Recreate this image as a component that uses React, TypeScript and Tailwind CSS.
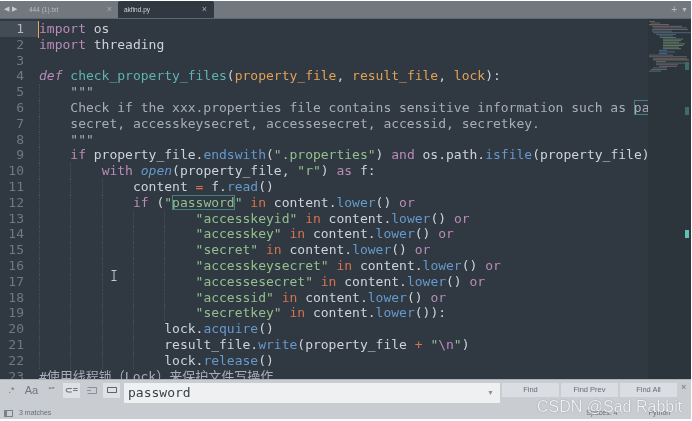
import React from "react";

const W = "text-[#cdd3da]";
const K = "text-[#b98cb9]";
const F = "text-[#5fb3b3]";
const P = "text-[#e0a258]";
const S = "text-[#93c08f]";
const B = "text-[#6699cc]";
const R = "text-[#d8714f]";
const C = "text-[#a7adba]";
const I = "text-[#6699cc] italic";
const D = "text-[#b98cb9] italic";
const M = "outline outline-1 outline-[#47807f] -outline-offset-1";

type T = [string, string];

const access = (name: string, end: T[]): T[] => [
  [`"${name}"`, S],
  [" ", W],
  ["in", R],
  [" content.", W],
  ["lower", B],
  ...end,
];
const orEnd: T[] = [["() ", W], ["or", K]];

const lines: { ind: number; t: T[] }[] = [
  { ind: 0, t: [["import", K], [" os", W]] },
  { ind: 0, t: [["import", K], [" threading", W]] },
  { ind: 0, t: [] },
  {
    ind: 0,
    t: [
      ["def", D],
      [" ", W],
      ["check_property_files", F],
      ["(", W],
      ["property_file", P],
      [", ", W],
      ["result_file", P],
      [", ", W],
      ["lock", P],
      ["):", W],
    ],
  },
  { ind: 1, t: [['"""', C]] },
  { ind: 1, t: [["Check if the xxx.properties file contains sensitive information such as ", C], ["pa", `${C} ${M}`]] },
  { ind: 1, t: [["secret, accesskeysecret, accessesecret, accessid, secretkey.", C]] },
  { ind: 1, t: [['"""', C]] },
  {
    ind: 1,
    t: [
      ["if", K],
      [" property_file.", W],
      ["endswith", B],
      ["(", W],
      ['".properties"', S],
      [") ", W],
      ["and", K],
      [" os.path.", W],
      ["isfile", B],
      ["(property_file):", W],
    ],
  },
  {
    ind: 2,
    t: [
      ["with", K],
      [" ", W],
      ["open", I],
      ["(property_file, ", W],
      ['"r"', S],
      [") ", W],
      ["as", K],
      [" f:", W],
    ],
  },
  { ind: 3, t: [["content ", W], ["=", R], [" f.", W], ["read", B], ["()", W]] },
  {
    ind: 3,
    t: [
      ["if", K],
      [" (", W],
      ['"', S],
      ["password", `${S} ${M}`],
      ['"', S],
      [" ", W],
      ["in", R],
      [" content.", W],
      ["lower", B],
      ["() ", W],
      ["or", K],
    ],
  },
  { ind: 5, t: access("accesskeyid", orEnd) },
  { ind: 5, t: access("accesskey", orEnd) },
  { ind: 5, t: access("secret", orEnd) },
  { ind: 5, t: access("accesskeysecret", orEnd) },
  { ind: 5, t: access("accessesecret", orEnd) },
  { ind: 5, t: access("accessid", orEnd) },
  { ind: 5, t: access("secretkey", [["()):", W]]) },
  { ind: 4, t: [["lock.", W], ["acquire", B], ["()", W]] },
  {
    ind: 4,
    t: [
      ["result_file.", W],
      ["write", B],
      ["(property_file ", W],
      ["+", R],
      [" ", W],
      ['"', S],
      ["\\n", K],
      ['"', S],
      [")", W],
    ],
  },
  { ind: 4, t: [["lock.", W], ["release", B], ["()", W]] },
  { ind: 0, t: [["#使用线程锁（Lock）来保护文件写操作", C]] },
];

const mono = "font-['DejaVu_Sans_Mono','Noto_Sans_CJK_SC',monospace]";

function Minimap() {
  const colors = ["#8a9099", "#b08fb0", "#5fb3b3", "#e5a55a", "#93c08f", "#6699cc"];
  const rows: [number, number, number][] = [
    [1, 6, 0], [3, 9, 0], [1, 20, 3], [4, 30, 1], [5, 34, 0], [4, 36, 0], [4, 20, 0], [5, 38, 5],
    [8, 20, 0], [11, 14, 0], [12, 16, 2], [15, 20, 4], [15, 18, 4], [15, 16, 4], [15, 22, 4], [15, 20, 4],
    [15, 16, 4], [15, 18, 4], [11, 8, 5], [11, 16, 5], [11, 8, 5], [1, 24, 0], [1, 38, 0], [5, 34, 0],
    [5, 36, 3], [8, 10, 0], [8, 30, 0], [8, 22, 0], [11, 18, 1], [5, 14, 0], [3, 16, 0], [1, 12, 2],
  ];
  return (
    <svg width="43" height="70" viewBox="0 0 43 70" className="block">
      {rows.map(([x, w, c], i) => (
        <rect key={i} x={x} y={2 + i * 1.6} width={w} height="1" fill={colors[c]} opacity="0.5" />
      ))}
    </svg>
  );
}

function Toggle({ active, children, big }: { active?: boolean; children: React.ReactNode; big?: boolean }) {
  return (
    <div
      className={`w-[17px] h-[15px] flex items-center justify-center text-[#6f767d] ${big ? "text-[11px]" : "text-[9px]"} ${active ? "bg-[#dfe2e5]" : ""}`}
    >
      {children}
    </div>
  );
}

function FindButton({ label }: { label: string }) {
  return (
    <div className="w-[57px] h-[14px] bg-[#dadde1] flex items-center justify-center text-[7.5px] text-[#666d74]">
      {label}
    </div>
  );
}

export default function App() {
  return (
    <div className="w-[692px] h-[421px] bg-white pt-px pr-px pb-[2px] overflow-hidden font-['Liberation_Sans',sans-serif] blur-[0.45px]">
      <div className="w-full h-full flex flex-col bg-[#303841]">
        <div className="h-[18px] shrink-0 bg-[#71787f] flex items-stretch border-b border-[#5f666d]">
          <div className="w-[29px] flex items-center gap-[3px] pl-[4px] text-[7px] text-[#c5c9ce]">
            <span>◀</span>
            <span>▶</span>
          </div>
          <div className="w-[89px] flex items-center justify-between pr-[6px] text-[6.5px] text-[#b9bdc2]">
            <span>444 (1).txt</span>
            <span className="text-[9px] text-[#a9adb2]">×</span>
          </div>
          <div className="w-[96px] bg-[#303841] rounded-t-[2px] flex items-center justify-between pl-[6px] pr-[7px] text-[6.5px] text-[#d0d4d8]">
            <span>akfind.py</span>
            <span className="text-[9px] text-[#a9adb2]">×</span>
          </div>
          <div className="flex-1 flex items-center justify-end gap-[4px] pr-[3px] text-[#b9bdc2]">
            <span className="text-[10px] leading-none">+</span>
            <span className="text-[7px] leading-none">▼</span>
          </div>
        </div>

        <div className="relative flex-1 min-h-0 flex overflow-hidden">
          <div className={`flex-1 min-w-0 overflow-hidden pt-[2px] text-[13px] leading-[15.8px] ${mono}`}>
            {lines.map((l, i) => (
              <div key={i} className="flex h-[15.8px] whitespace-pre">
                <div
                  className={`w-[39px] shrink-0 pr-[15px] text-right ${i === 0 ? "bg-[#434b55] text-[#b4b9bf]" : "text-[#707983]"}`}
                >
                  {i + 1}
                </div>
                <div className="relative flex-1 min-w-0 flex">
                  {i === 0 && <div className="absolute left-[-1px] top-0 w-px h-[17px] bg-[#e5a55a]" />}
                  {Array.from({ length: l.ind }).map((_, g) => (
                    <span
                      key={g}
                      className="inline-block w-[31.32px] shrink-0 border-l border-dotted border-[#464e57]"
                    />
                  ))}
                  <span>
                    {l.t.map(([s, c], j) => (
                      <span key={j} className={c}>
                        {s}
                      </span>
                    ))}
                  </span>
                </div>
              </div>
            ))}
          </div>
          <div className="w-[43px] shrink-0 bg-[#2c343c] relative">
            <Minimap />
            <div className="absolute left-[37px] top-[43px] w-[4px] h-[8px] bg-[#3f6a6c]" />
            <div className="absolute left-[37px] top-[88px] w-[4px] h-[8px] bg-[#3f6a6c]" />
            <div className="absolute left-[37px] top-[211px] w-[4px] h-[8px] bg-[#5fc0b8]" />
          </div>
          <svg width="6" height="11" viewBox="0 0 6 11" className="absolute left-[111px] top-[251px]" fill="none" stroke="#c4c9ce" strokeWidth="1">
            <path d="M0.5 0.5H5.5M3 0.5V10.5M0.5 10.5H5.5" />
          </svg>
        </div>

        <div className="relative h-[40px] shrink-0 bg-[#c9cdd2] border-t border-[#aeb3b8] flex flex-col">
          <div className="flex items-start pt-[3px] pl-[3px]">
            <div className="flex gap-[3px] w-[121px]">
              <Toggle>.*</Toggle>
              <Toggle big>Aa</Toggle>
              <Toggle>“”</Toggle>
              <Toggle active>
                <span className="font-bold">⊂=</span>
              </Toggle>
              <Toggle>
                <svg width="10" height="7" viewBox="0 0 10 7" fill="none" stroke="#7b8188" strokeWidth="0.8">
                  <path d="M0.5 0.5H9.5V6.5H0.5M0 3.5H4" />
                </svg>
              </Toggle>
              <Toggle active>
                <svg width="10" height="7" viewBox="0 0 10 7" fill="none" stroke="#4f565d" strokeWidth="0.9">
                  <path d="M0.5 0.5H9.5V5.5H0.5Z" />
                </svg>
              </Toggle>
            </div>
            <div className="w-[376px] h-[20px] bg-[#eff0f1] flex items-center justify-between pl-[4px] pr-[6px]">
              <span className={`text-[13px] text-[#3a4046] ${mono}`}>password</span>
              <span className="text-[7px] text-[#8c9298]">▼</span>
            </div>
            <div className="flex gap-[2px] ml-[2px]">
              <FindButton label="Find" />
              <FindButton label="Find Prev" />
              <FindButton label="Find All" />
            </div>
            <span className="ml-[4px] text-[9px] leading-none text-[#6f767d]">×</span>
          </div>
          <div className="flex-1 flex items-center pl-[4px] pt-[4px] text-[7px] text-[#666d74]">
            <span className="w-[9px] h-[7px] border border-[#7b8188] border-l-[3px]" />
            <span className="ml-[6px]">3 matches</span>
            <span className="ml-[535px]">Spaces: 4</span>
            <span className="ml-[31px]">Python</span>
          </div>
          <div className="absolute left-[537px] top-[19px] text-[16px] leading-none text-[#eff1f3] [text-shadow:0_0_1px_#6b7278]">
            CSDN @Sad Rabbit
          </div>
        </div>
      </div>
    </div>
  );
}
